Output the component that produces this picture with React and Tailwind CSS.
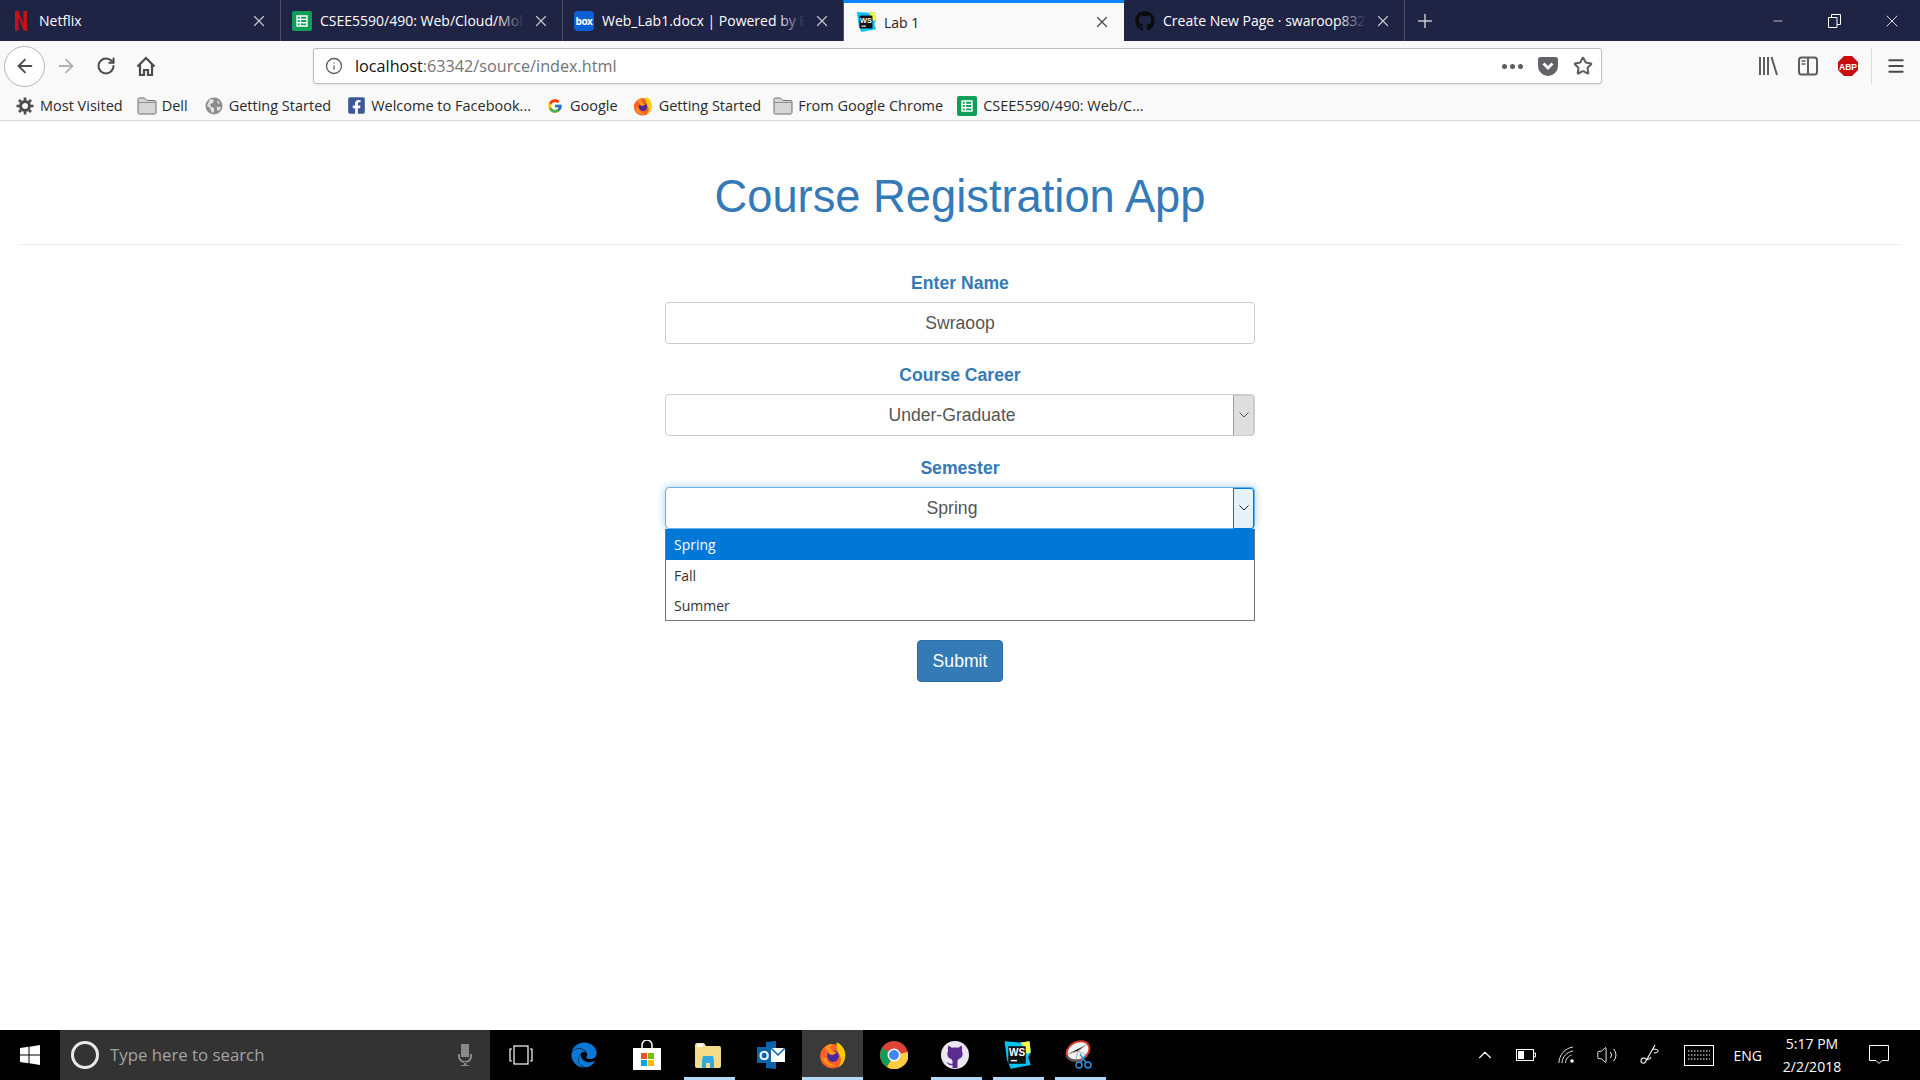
import { X, Plus, Minus, ArrowLeft, ArrowRight, RotateCw, Info, Star, Menu, ChevronUp, Volume2 } from 'lucide-react';
import { FaGithub, FaFacebookSquare, FaEdge } from 'react-icons/fa';
import { FcGoogle } from 'react-icons/fc';

const uiFont = 'font-["Open_Sans",sans-serif]';
const bsFont = 'font-["Liberation_Sans",Arial,sans-serif]';

function Sheets({ size = 20 }) {
  return (
    <svg width={size} height={size} viewBox="0 0 20 20">
      <rect width="20" height="20" rx="2" fill="#0f9d58" />
      <path d="M5 5h10v10H5z M5 8.4h10 M5 11.7h10 M8.4 5v10" fill="none" stroke="#fff" strokeWidth="1.4" />
    </svg>
  );
}

function WsIcon({ size = 20 }) {
  return (
    <svg width={size} height={size} viewBox="0 0 24 24">
      <path d="M2 1l13 1 7-1 1 9-2 4 2 6-16 3-3-7z" fill="#07c3f2" />
      <path d="M15 2l7-1 1 9-3 1z" fill="#fcf84a" />
      <rect x="5" y="5" width="14" height="14" fill="#111" />
      <path d="M7 16.500h5" stroke="#fff" strokeWidth="1.200" />
      <text x="12" y="13" textAnchor="middle" fontSize="8" fontWeight="700" fontFamily="Liberation Sans, sans-serif" fill="#fff">WS</text>
    </svg>
  );
}

function FolderIcon() {
  return (
    <svg width="20" height="18" viewBox="0 0 20 18">
      <path d="M1 2.5A1.5 1.5 0 012.5 1h5L10 3.5h7.5A1.5 1.5 0 0119 5v10.5a1.5 1.5 0 01-1.500 1.500h-15A1.500 1.500 0 011 15.500z" fill="#d6d6d6" stroke="#6f6f6f" />
      <path d="M1.500 5.500h17" stroke="#8c8c8c" />
    </svg>
  );
}

function GlobeIcon() {
  return (
    <svg width="18" height="18" viewBox="0 0 18 18">
      <circle cx="9" cy="9" r="8.500" fill="#8d8d8d" />
      <path d="M5 2l4 1-1 3-3 1 1 3 3 1v4l-2 1-2-5-3-2zM12 3l3 3-2 1zM12 10l4 0-2 4-2-1z" fill="#e4e4e4" />
    </svg>
  );
}

function FirefoxIcon({ size = 18 }) {
  return (
    <svg width={size} height={size} viewBox="0 0 24 24">
      <circle cx="11.500" cy="13" r="10.500" fill="#ff5f2b" />
      <path d="M15 1c5 2 8 7 7.500 12-.4 5-3 8-6 9.500 3-4 3-8 .5-11.500C15.500 8 15 4 15 1z" fill="#ffcb00" />
      <circle cx="12" cy="13" r="5" fill="#4a2a9b" />
      <path d="M5 6c2-3 5-4 7-3-2 1-3 3-2 4l5 3-3 2c-3 0-4-1-4-3z M3 14c1 6 7 9 12 7-4 0-8-2-9-7z" fill="#ff980e" />
    </svg>
  );
}

function Gear() {
  return (
    <svg width="18" height="18" viewBox="0 0 18 18">
      <circle cx="9" cy="9" r="4.500" fill="none" stroke="#4a4a4a" strokeWidth="3" />
      <path d="M9 0.500v3 M9 14.500v3 M0.500 9h3 M14.500 9h3 M3 3l2 2 M13 13l2 2 M15 3l-2 2 M5 13l-2 2" stroke="#4a4a4a" strokeWidth="2.600" />
    </svg>
  );
}

function Tab({ icon, title, width = 'w-[281px]', fade }) {
  return (
    <div className={`${width} h-[41px] flex items-center pl-[11px] pr-[12px] border-r border-[#4d5068] shrink-0`}>
      <span className="w-5 h-5 flex items-center justify-center shrink-0">{icon}</span>
      <span className="relative ml-[8px] flex-1 overflow-hidden whitespace-nowrap text-[14px] text-white">
        {title}
        {fade && <span className="absolute right-0 top-0 bottom-0 w-7 bg-gradient-to-r from-transparent to-[#1f2344]" />}
      </span>
      <X className="w-[18px] h-[18px] ml-2 text-[#c4c6d0] shrink-0" strokeWidth={1.6} />
    </div>
  );
}

function Bookmark({ icon, label, gap = 'ml-[5px]' }) {
  return (
    <div className="flex items-center h-full shrink-0">
      {icon}
      <span className={`${gap} text-[14.500px] text-[#2a2a2a] whitespace-nowrap`}>{label}</span>
    </div>
  );
}

function TabStrip() {
  return (
    <div className={`${uiFont} h-[41px] bg-[#1f2344] flex items-start shrink-0`}>
      <Tab
        title="Netflix"
        icon={
          <svg width="12" height="20" viewBox="0 0 12 20">
            <path d="M0 0h3.600l4.800 13V0H12v20l-3.400-.5L3.600 6.500V19.500L0 20z" fill="#c8101a" />
          </svg>
        }
      />
      <Tab title="CSEE5590/490: Web/Cloud/Mobile" icon={<Sheets />} width="w-[282px]" fade />
      <Tab
        title="Web_Lab1.docx | Powered by Box"
        icon={
          <span className="w-5 h-5 rounded-sm bg-[#0b5fd7] text-white text-[10px] leading-5 text-center font-bold tracking-tighter">box</span>
        }
        fade
      />
      <div className="w-[280px] h-[41px] bg-[#f9f9fa] border-t-[3px] border-[#0a84ff] flex items-center pl-[11px] pr-[13px] shrink-0">
        <WsIcon size={22} />
        <span className="ml-[7px] flex-1 text-[14px] text-[#222]">Lab 1</span>
        <X className="w-[18px] h-[18px] text-[#444]" strokeWidth={1.6} />
      </div>
      <Tab title="Create New Page · swaroop832/" icon={<FaGithub className="w-5 h-5 text-[#0b0b0b]" />} fade />
      <div className="w-[40px] h-[41px] flex items-center justify-center shrink-0">
        <Plus className="w-[22px] h-[22px] text-[#c9cad3]" strokeWidth={1.6} />
      </div>
      <div className="ml-auto flex h-[41px] items-center">
        <div className="w-[57px] flex justify-center"><Minus className="w-[14px] h-[14px] text-white" strokeWidth={1.2} /></div>
        <div className="w-[57px] flex justify-center">
          <svg width="13" height="14" viewBox="0 0 13 14" fill="none" stroke="#fff">
            <path d="M.5 3.500h8.500v10H.5z M3.500 3.500V.500h9v10H9" />
          </svg>
        </div>
        <div className="w-[57px] flex justify-center"><X className="w-[20px] h-[20px] text-white" strokeWidth={1} /></div>
      </div>
    </div>
  );
}

function NavBar() {
  return (
    <div className={`${uiFont} h-[50px] bg-[#f9f9fa] flex items-center pl-[4px] shrink-0`}>
      <div className="w-[41px] h-[41px] rounded-full bg-white border border-[#b5b5b8] flex items-center justify-center">
        <ArrowLeft className="w-[22px] h-[22px] text-[#4a4a4f]" strokeWidth={2} />
      </div>
      <ArrowRight className="w-[22px] h-[22px] ml-[10px] text-[#b1b1b3]" strokeWidth={2} />
      <RotateCw className="w-[20px] h-[20px] ml-[19px] text-[#4a4a4f]" strokeWidth={2.400} />
      <svg width="20" height="21" viewBox="0 0 20 21" className="ml-[20px]" fill="none" stroke="#4a4a4f" strokeWidth="2.200">
        <path d="M1.500 10.500L10 2l8.500 8.500 M4 8.500V19h4v-5h4v5h4V8.500" />
      </svg>
      <div className="ml-[157px] w-[1289px] h-[36px] bg-white rounded-[3px] border border-[#bdbdbd] flex items-center pl-[11px] pr-[8px] shadow-[0_1px_2px_rgba(0,0,0,0.08)]">
        <Info className="w-[18px] h-[18px] text-[#5c5c5f]" strokeWidth={1.700} />
        <span className="ml-[12px] text-[16.200px] text-[#111]">localhost</span>
        <span className="text-[16.200px] text-[#737373]">:63342/source/index.html</span>
        <div className="ml-auto flex gap-[3px] items-center">
          <span className="w-[5px] h-[5px] rounded-full bg-[#5c5c5f]" />
          <span className="w-[5px] h-[5px] rounded-full bg-[#5c5c5f]" />
          <span className="w-[5px] h-[5px] rounded-full bg-[#5c5c5f]" />
        </div>
        <svg width="20" height="21" viewBox="0 0 20 21" className="ml-[15px]">
          <path d="M2.500 1h15A2.500 2.500 0 0120 3.500V10a10 10 0 01-20 0V3.500A2.500 2.500 0 012.500 1z" fill="#636367" />
          <path d="M5.500 7.500L10 12l4.500-4.500" fill="none" stroke="#fff" strokeWidth="2.800" />
        </svg>
        <Star className="w-[20px] h-[20px] ml-[15px] text-[#5c5c5f]" strokeWidth={2.400} />
      </div>
      <div className="ml-[156px] flex items-center">
        <svg width="20" height="20" viewBox="0 0 20 20" fill="none" stroke="#5c5c5f" strokeWidth="2">
          <path d="M2 1v18 M6 1v18 M10 1v18 M13.500 1l5.500 18" />
        </svg>
        <svg width="20" height="20" viewBox="0 0 20 20" className="ml-[20px]" fill="none" stroke="#5c5c5f" strokeWidth="2">
          <rect x="1" y="1.500" width="18" height="17" rx="2.500" />
          <path d="M10 1.500v17" />
          <path d="M3.500 5h4 M3.500 8h4" strokeWidth="1.500" />
        </svg>
        <svg width="20" height="20" viewBox="0 0 20 20" className="ml-[20px]">
          <polygon points="6,0 14,0 20,6 20,14 14,20 6,20 0,14 0,6" fill="#c70d0d" />
          <text x="10" y="13.500" textAnchor="middle" fontSize="8.500" fontWeight="700" fontFamily="Liberation Sans, sans-serif" fill="#fff">ABP</text>
        </svg>
        <div className="ml-[13px] w-px h-[36px] bg-[#dcdcdc]" />
        <Menu className="w-[20px] h-[20px] ml-[14px] text-[#4a4a4f]" strokeWidth={2.400} />
      </div>
    </div>
  );
}

function BookmarksBar() {
  return (
    <div className={`${uiFont} h-[30px] bg-[#f9f9fa] border-b border-[#d7d7db] flex items-center pl-[16px] shrink-0`}>
      <Bookmark icon={<Gear />} label="Most Visited" gap="ml-[6px]" />
      <div className="ml-[14px]"><Bookmark icon={<FolderIcon />} label="Dell" /></div>
      <div className="ml-[17px]"><Bookmark icon={<GlobeIcon />} label="Getting Started" gap="ml-[6px]" /></div>
      <div className="ml-[16px]"><Bookmark icon={<FaFacebookSquare className="w-[19px] h-[19px] text-[#3b5998]" />} label="Welcome to Facebook..." /></div>
      <div className="ml-[16px]"><Bookmark icon={<FcGoogle className="w-[16px] h-[16px]" />} label="Google" gap="ml-[7px]" /></div>
      <div className="ml-[15px]"><Bookmark icon={<FirefoxIcon size={20} />} label="Getting Started" gap="ml-[6px]" /></div>
      <div className="ml-[12px]"><Bookmark icon={<FolderIcon />} label="From Google Chrome" /></div>
      <div className="ml-[14px]"><Bookmark icon={<Sheets />} label="CSEE5590/490: Web/C..." gap="ml-[6px]" /></div>
    </div>
  );
}

function Label({ children, className = '' }) {
  return <div className={`text-[17.600px] leading-[26px] font-bold text-[#337ab7] text-center ${className}`}>{children}</div>;
}

function SelectBox({ value, focused, className = '' }) {
  return (
    <div
      className={`h-[42px] bg-white rounded border flex ${className} ${
        focused ? 'border-[#66afe9] shadow-[0_0_8px_rgba(102,175,233,0.6)]' : 'border-[#ccc]'
      }`}
    >
      <div className="flex-1 flex items-center justify-center pl-[5px] text-[17.600px] text-[#555]">{value}</div>
      <div className={`w-[21px] my-[-0.5px] flex items-center justify-center border ${focused ? 'border-[#0078d7] bg-[#e5f1fb] rounded-r-[3px]' : 'border-[#a0a0a0] bg-[#dedede] border-r-[#ccc] border-y-[#ccc] rounded-r-[3px]'}`}>
        <svg width="10" height="6" viewBox="0 0 10 6" fill="none" stroke={focused ? '#222' : '#555'}>
          <path d="M.5 .5L5 5l4.500-4.500" />
        </svg>
      </div>
    </div>
  );
}

function Form() {
  return (
    <div className={`${bsFont} w-[590px] mx-auto mt-[25px]`}>
      <Label>Enter Name</Label>
      <div className="h-[42px] mt-[6px] bg-white rounded border border-[#ccc] flex items-center justify-center text-[17.600px] text-[#555]">
        Swraoop
      </div>
      <Label className="mt-[18px]">Course Career</Label>
      <SelectBox value="Under-Graduate" className="mt-[6px]" />
      <Label className="mt-[19px]">Semester</Label>
      <div className="relative">
        <SelectBox value="Spring" focused className="mt-[6px]" />
        <div className={`${uiFont} absolute left-0 right-0 top-full bg-white border border-[#767676] border-t-0 text-[14px] text-[#333] z-10`}>
          <div className="h-[31px] px-[8px] flex items-center bg-[#0078d7] text-white">Spring</div>
          <div className="h-[30px] px-[8px] flex items-center">Fall</div>
          <div className="h-[30px] px-[8px] flex items-center">Summer</div>
        </div>
      </div>
      <div className="flex justify-center mt-[111px]">
        <button className="w-[86px] h-[42px] bg-[#337ab7] border border-[#2e6da4] rounded text-white text-[17.600px]">Submit</button>
      </div>
    </div>
  );
}

function TaskIcon({ children, active, underline, width = 'w-[62px]' }) {
  return (
    <div className={`relative h-full ${width} flex items-center justify-center ${active ? 'bg-[#3a3a3a]' : ''}`}>
      {children}
      {underline && <span className={`absolute bottom-0 h-[3px] bg-[#b5daf9] ${active ? 'left-0 right-0' : 'left-[7px] right-[4px]'}`} />}
    </div>
  );
}

function Taskbar() {
  return (
    <div className={`${uiFont} h-[50px] bg-black flex items-center shrink-0 text-white`}>
      <div className="w-[60px] flex justify-center">
        <svg width="20" height="20" viewBox="0 0 20 20" fill="#fff">
          <path d="M0 3l8.500-1.200v7.700H0zM9.500 1.700L20 0v9.500H9.500zM0 10.500h8.500v7.700L0 17zM9.500 10.500H20V20L9.500 18.300z" />
        </svg>
      </div>
      <div className="w-[430px] h-full bg-[#333] flex items-center pl-[11px]">
        <span className="w-[28px] h-[28px] rounded-full border-[3px] border-[#e8e8e8]" />
        <span className="ml-[11px] text-[16.800px] text-[#a3a3a3]">Type here to search</span>
        <svg width="16" height="24" viewBox="0 0 16 24" className="ml-auto mr-[17px]" fill="#8a8a8a">
          <path d="M4 1h8v13H4z" />
          <path d="M1 11v3a7 6 0 0014 0v-3h-2v3a5 4 0 01-10 0v-3zM7 19h2v3h3v1H4v-1h3z" />
        </svg>
      </div>
      <div className="flex h-full items-center">
        <TaskIcon>
          <svg width="24" height="20" viewBox="0 0 24 20" fill="none" stroke="#fff" strokeWidth="1.200">
            <rect x="5" y="1" width="14" height="18" />
            <path d="M3 4H1v12h2 M21 4h2v12h-2" />
          </svg>
        </TaskIcon>
        <TaskIcon width="w-[64px]"><FaEdge className="w-[26px] h-[28px] text-[#0a78d6]" /></TaskIcon>
        <TaskIcon width="w-[61px]">
          <svg width="28" height="30" viewBox="0 0 28 30">
            <path d="M9 9V5a5 5 0 0110 0v4" fill="none" stroke="#fff" strokeWidth="1.500" />
            <rect x="0" y="8" width="28" height="22" fill="#fff" />
            <rect x="8" y="13" width="6" height="6" fill="#f25022" />
            <rect x="15" y="13" width="6" height="6" fill="#7fba00" />
            <rect x="8" y="20" width="6" height="6" fill="#00a4ef" />
            <rect x="15" y="20" width="6" height="6" fill="#ffb900" />
          </svg>
        </TaskIcon>
        <TaskIcon underline>
          <svg width="28" height="26" viewBox="0 0 28 26">
            <path d="M1 3a2 2 0 012-2h7l2 3h13a2 2 0 012 2v18a2 2 0 01-2 2H3a2 2 0 01-2-2z" fill="#f6dc8a" />
            <path d="M3 2h6v3H3z" fill="#fff" />
            <path d="M8 18l1-4h10l1 4v8h-4v-5h-4v5H8z" fill="#2fa9e0" />
          </svg>
        </TaskIcon>
        <TaskIcon width="w-[63px]">
          <svg width="28" height="28" viewBox="0 0 28 28">
            <path d="M9 1l10-1v28L9 27z" fill="#0a64ad" />
            <rect x="14" y="7" width="14" height="14" fill="#fff" />
            <path d="M14 7l7 7 7-7" fill="none" stroke="#0a64ad" strokeWidth="1.500" />
            <rect x="0" y="6" width="14" height="16" fill="#0a64ad" />
            <text x="7" y="19" textAnchor="middle" fontSize="13" fontWeight="700" fontFamily="Liberation Sans, sans-serif" fill="#fff">O</text>
          </svg>
        </TaskIcon>
        <TaskIcon active underline width="w-[61px]"><FirefoxIcon size={28} /></TaskIcon>
        <TaskIcon width="w-[61px]">
          <svg width="28" height="28" viewBox="0 0 28 28">
            <circle cx="14" cy="14" r="14" fill="#db4437" />
            <path d="M14 14L2 7A14 14 0 007 26z" fill="#0f9d58" />
            <path d="M14 14l14-3a14 14 0 01-21 15z" fill="#ffcd40" />
            <circle cx="14" cy="14" r="6.500" fill="#fff" />
            <circle cx="14" cy="14" r="5" fill="#4285f4" />
          </svg>
        </TaskIcon>
        <TaskIcon underline>
          <svg width="28" height="28" viewBox="0 0 28 28">
            <circle cx="14" cy="14" r="14" fill="#ece7f5" />
            <path d="M7.500 4.500l3.300 2.300c2-.5 4.400-.5 6.400 0l3.300-2.300c.8 2 .8 4 .4 5.500 1.500 2.500 1 7-3.400 8.200-.6.500-1 1.200-1 2.300V27h-5v-3c-3 .6-5-1-6-3 1.500.6 3 2.500 6 1.500v-2c0-1.100-.4-1.800-1-2.300C6.100 17 5.600 12.500 7.100 10c-.4-1.500-.4-3.500.4-5.500z" fill="#5c2d91" />
          </svg>
        </TaskIcon>
        <TaskIcon underline><WsIcon size={30} /></TaskIcon>
        <TaskIcon underline>
          <svg width="30" height="30" viewBox="0 0 30 30">
            <ellipse cx="14" cy="11" rx="12" ry="9" fill="#f5f5f5" stroke="#d6352b" strokeWidth="2" transform="rotate(-30 14 11)" />
            <path d="M4 14l10-3 8-6M14 11l-2 8M14 11l8 4" stroke="#aaa" strokeWidth="1" />
            <path d="M3 15c4 5 9 5 13 4l-2 3c-5 0-9-1-12-5z" fill="#555" />
            <path d="M16 14l6 9M22 15l-6 8" stroke="#2c8fd6" strokeWidth="1.500" />
            <circle cx="15" cy="25" r="3" fill="none" stroke="#2c8fd6" strokeWidth="1.500" />
            <circle cx="24" cy="25" r="3" fill="none" stroke="#2c8fd6" strokeWidth="1.500" />
          </svg>
        </TaskIcon>
      </div>
      <div className="ml-auto flex items-center h-full pr-[31px]">
        <ChevronUp className="w-[22px] h-[22px] text-white" strokeWidth={1.200} />
        <svg width="20" height="12" viewBox="0 0 20 12" className="ml-[20px]" fill="none" stroke="#fff">
          <rect x=".5" y=".5" width="17" height="11" />
          <rect x="2" y="2" width="6" height="8" fill="#fff" stroke="none" />
          <path d="M18 4h1.500v4H18" />
        </svg>
        <svg width="18" height="18" viewBox="0 0 18 18" className="ml-[22px]" fill="none" stroke="#ddd">
          <path d="M1 17C1 9 7 2 15 1 M4 17C4 11 9 6 15 5 M7.500 17c0-4 3-7 6-8" />
          <circle cx="14" cy="15" r="1.800" fill="#fff" stroke="none" />
        </svg>
        <Volume2 className="w-[22px] h-[22px] ml-[20px] text-white" strokeWidth={1} />
        <svg width="20" height="22" viewBox="0 0 20 22" className="ml-[22px]" fill="none" stroke="#fff" strokeWidth="1.100">
          <path d="M15 1L6 17c-1 3-5 3-5 0s3-4 5-2c2 1 4 0 5-2 M13 5c3 0 5 1 5 2s-2 2-4 2" />
        </svg>
        <svg width="30" height="21" viewBox="0 0 30 21" className="ml-[24px]" fill="none" stroke="#fff">
          <rect x=".5" y=".5" width="29" height="20" />
          <path d="M4 6h22 M4 10h22 M4 14h22" strokeDasharray="1.500 1.500" />
        </svg>
        <span className="ml-[20px] text-[14px]">ENG</span>
        <div className="ml-[20px] w-[60px] text-center text-[14px] leading-[23px]">
          <div>5:17 PM</div>
          <div>2/2/2018</div>
        </div>
        <svg width="20" height="20" viewBox="0 0 20 20" className="ml-[27px]" fill="none" stroke="#fff">
          <path d="M.5 .5h19v15H13l-3 3-3-3H.5z" />
        </svg>
      </div>
    </div>
  );
}

export default function App() {
  return (
    <div className="h-screen w-full overflow-hidden flex flex-col bg-white">
      <TabStrip />
      <NavBar />
      <BookmarksBar />
      <div className="flex-1 px-[19px]">
        <div className="pt-[51px] h-[124px] border-b border-[#eee] text-center">
          <h1 className={`${bsFont} text-[45.300px] leading-[1.1] text-[#337ab7]`}>Course Registration App</h1>
        </div>
        <Form />
      </div>
      <Taskbar />
    </div>
  );
}
